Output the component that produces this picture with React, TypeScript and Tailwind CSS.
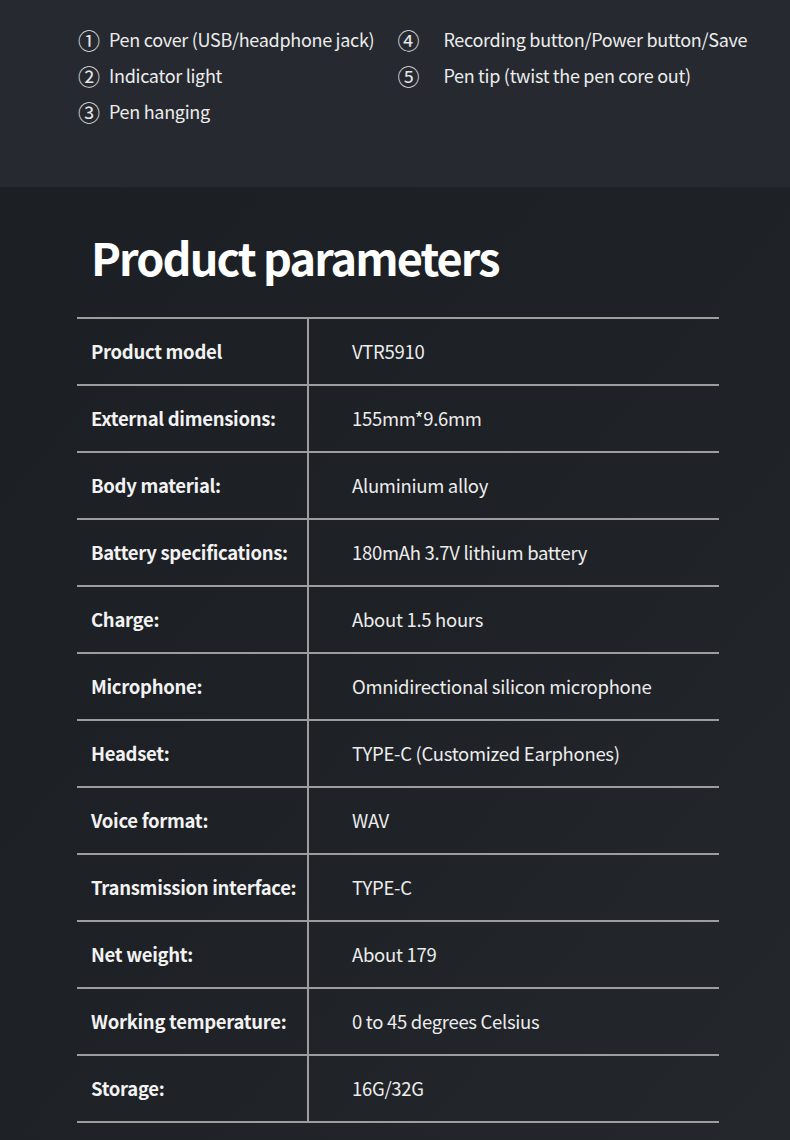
import React from 'react'

const specs: [string, string][] = [
  ['Product model', 'VTR5910'],
  ['External dimensions:', '155mm*9.6mm'],
  ['Body material:', 'Aluminium alloy'],
  ['Battery specifications:', '180mAh 3.7V lithium battery'],
  ['Charge:', 'About 1.5 hours'],
  ['Microphone:', 'Omnidirectional silicon microphone'],
  ['Headset:', 'TYPE-C (Customized Earphones)'],
  ['Voice format:', 'WAV'],
  ['Transmission interface:', 'TYPE-C'],
  ['Net weight:', 'About 179'],
  ['Working temperature:', '0 to 45 degrees Celsius'],
  ['Storage:', '16G/32G'],
]

function Part({ n, text, gap }: { n: string; text: string; gap: string }) {
  return (
    <div className="flex items-center h-[36px]">
      <span className="text-[22px] w-[22px] leading-none text-[#e6e6e6]">{n}</span>
      <span className={`${gap} text-[18px] tracking-[-0.3px] text-[#ececec]`}>{text}</span>
    </div>
  )
}

export default function App() {
  return (
    <div
      className="w-[790px] h-[1140px] overflow-hidden bg-[#1d2024] text-white"
      style={{ fontFamily: '"Noto Sans CJK SC", "Noto Sans", sans-serif' }}
    >
      {/* parts list */}
      <section className="h-[187px] bg-[#262a30] pt-[21px] pl-[78px] flex gap-[25px]">
        <div className="flex flex-col">
          <Part n="①" text="Pen cover (USB/headphone jack)" gap="ml-[9px]" />
          <Part n="②" text="Indicator light" gap="ml-[9px]" />
          <Part n="③" text="Pen hanging" gap="ml-[9px]" />
        </div>
        <div className="flex flex-col -ml-[2px]">
          <Part n="④" text="Recording button/Power button/Save" gap="ml-[24px]" />
          <Part n="⑤" text="Pen tip (twist the pen core out)" gap="ml-[24px]" />
        </div>
      </section>

      {/* parameters */}
      <section className="bg-gradient-to-br from-[#1c1f23] via-[#1e2125] to-[#24282d] h-[953px] pt-[32px]">
        <h1 className="ml-[91px] text-[45px] font-bold leading-[76px] tracking-[-1.9px] text-white">
          Product parameters
        </h1>
        <div className="ml-[77px] mt-[22px] w-[642px] border-t-2 border-[#9d9d9d]">
          {specs.map(([k, v]) => (
            <div key={k} className="flex h-[67px] border-b-2 border-[#9d9d9d]">
              <div className="w-[232px] border-r-2 border-[#9d9d9d] flex items-center pl-[14px] text-[18.5px] font-bold tracking-[-0.3px] text-[#f2f2f2]">
                {k}
              </div>
              <div className="flex-1 flex items-center pl-[43px] text-[18.5px] tracking-[-0.3px] text-[#ececec]">
                {v}
              </div>
            </div>
          ))}
        </div>
      </section>
    </div>
  )
}
